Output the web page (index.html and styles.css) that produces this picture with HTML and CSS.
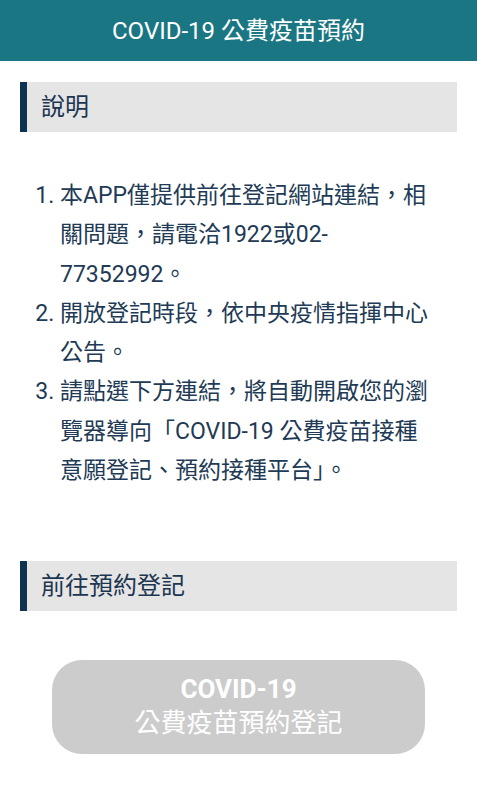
FILE: index.html
```html
<!DOCTYPE html>
<html>
<head>
<meta charset="utf-8">
<link rel="stylesheet" href="styles.css">
</head>
<body>
<div id="appBar">COVID-19 公費疫苗預約</div>
<div class="content">
  <div class="section-title">說明</div>
  <ol class="notes">
    <li>本APP僅提供前往登記網站連結，相關問題，請電洽1922或02-77352992。</li>
    <li>開放登記時段，依中央疫情指揮中心公告。</li>
    <li>請點選下方連結，將自動開啟您的瀏覽器導向「COVID-19 公費疫苗接種意願登記、預約接種平台」。</li>
  </ol>
  <div class="section-title second">前往預約登記</div>
  <button class="go-button">
    <span class="go-top">COVID-19</span>
    <span class="go-bottom">公費疫苗預約登記</span>
  </button>
</div>
</body>
</html>
```

FILE: styles.css
```css
body {
  margin: 0;
  font-family: Roboto, "Noto Sans CJK TC", sans-serif;
  background: #fff;
}
#appBar {
  height: 61px;
  line-height: 63px;
  background: #1a7682;
  color: #fff;
  font-size: 24px;
  text-align: center;
}
.content {
  padding: 0 20px;
}
.section-title {
  margin-top: 21px;
  height: 50px;
  line-height: 50px;
  background: #e5e5e5;
  border-left: 7px solid #0d3352;
  padding-left: 14px;
  font-size: 24px;
  color: #1c3550;
}
.section-title.second {
  margin-top: 71px;
}
.notes {
  margin: 44px 0 0 0;
  padding: 0 20px 0 40px;
  font-size: 23px;
  line-height: 39.3px;
  color: #213a55;
}
.go-button {
  display: flex;
  flex-direction: column;
  align-items: center;
  justify-content: center;
  box-sizing: border-box;
  width: calc(100% - 64px);
  height: 94px;
  margin: 49px 32px 0 32px;
  border: none;
  border-radius: 30px;
  background: #cccccc;
  color: #fff;
  font-family: Roboto, "Noto Sans CJK TC", sans-serif;
}
.go-top {
  font-size: 26px;
  font-weight: bold;
  line-height: 33px;
}
.go-bottom {
  font-size: 26px;
  line-height: 35px;
}
```
